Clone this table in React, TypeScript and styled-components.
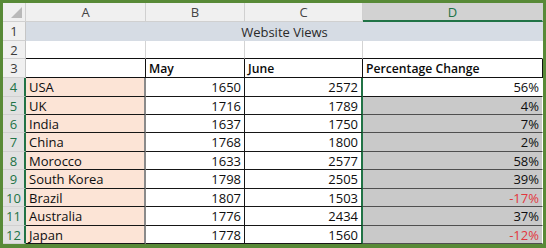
import React from 'react';
import styled, { createGlobalStyle } from 'styled-components';

const GlobalStyle = createGlobalStyle`
  html, body {
    margin: 0;
    padding: 0;
    background: #ffffff;
  }
  body {
    font-family: 'Open Sans', 'Liberation Sans', sans-serif;
  }
`;

const green = '#217346';
const frame = '#588a37';

type Row = { country: string; may: number; june: number; change: number };

const rows: Row[] = [
  { country: 'USA', may: 1650, june: 2572, change: 56 },
  { country: 'UK', may: 1716, june: 1789, change: 4 },
  { country: 'India', may: 1637, june: 1750, change: 7 },
  { country: 'China', may: 1768, june: 1800, change: 2 },
  { country: 'Morocco', may: 1633, june: 2577, change: 58 },
  { country: 'South Korea', may: 1798, june: 2505, change: 39 },
  { country: 'Brazil', may: 1807, june: 1503, change: -17 },
  { country: 'Australia', may: 1776, june: 2434, change: 37 },
  { country: 'Japan', may: 1778, june: 1560, change: -12 },
];

const Frame = styled.div`
  width: 546px;
  height: 248px;
  box-sizing: border-box;
  border: 3px solid ${frame};
  border-bottom-width: 4px;
  overflow: hidden;
`;

const Sheet = styled.div`
  display: grid;
  grid-template-columns: 23px 120px 99px 118px 180px;
  grid-template-rows: 19px 19px 18px 19px 19px 18px 18px 19px 18px 19px 18px 19px 18px;
  font-size: 13px;
  color: #111111;
`;

const Corner = styled.div`
  position: relative;
  background: #f0f0f0;
  border-right: 1px solid #d0d0d0;
  border-bottom: 1px solid #d0d0d0;
  box-sizing: border-box;

  &::after {
    content: '';
    position: absolute;
    right: 3px;
    bottom: 3px;
    border-style: solid;
    border-width: 0 0 11px 11px;
    border-color: transparent transparent #b9b9b9 transparent;
  }
`;

const ColHead = styled.div<{ $active?: boolean }>`
  display: flex;
  align-items: center;
  justify-content: center;
  box-sizing: border-box;
  background: ${(p) => (p.$active ? '#d2d2d2' : '#f0f0f0')};
  color: ${(p) => (p.$active ? green : '#444444')};
  border-right: 1px solid ${(p) => (p.$active ? '#d2d2d2' : '#d0d0d0')};
  border-bottom: ${(p) => (p.$active ? `2px solid ${green}` : '1px solid #d0d0d0')};
`;

const RowHead = styled.div<{ $active?: boolean }>`
  display: flex;
  align-items: center;
  justify-content: center;
  box-sizing: border-box;
  background: ${(p) => (p.$active ? '#e1e1e1' : '#f0f0f0')};
  color: ${(p) => (p.$active ? green : '#3b3b3b')};
  border-bottom: 1px solid #d0d0d0;
  border-right: ${(p) => (p.$active ? `2px solid ${green}` : '1px solid #c6c6c6')};
`;

const TitleCell = styled.div`
  grid-column: span 4;
  display: flex;
  align-items: center;
  justify-content: center;
  background: #d6dce4;
  color: #2a2a2a;
`;

const BlankCell = styled.div<{ $last?: boolean }>`
  box-sizing: border-box;
  border-right: 1px solid ${(p) => (p.$last ? '#ffffff' : '#d4d4d4')};
  border-bottom: 1px solid #111111;
`;

const HeadCell = styled.div`
  display: flex;
  align-items: center;
  padding-left: 3px;
  box-sizing: border-box;
  font-weight: 600;
  font-size: 12.2px;
  color: #0a0a0a;
  border-right: 1px solid #111111;
  border-bottom: 1px solid #111111;
`;

type Tone = 'peach' | 'white' | 'gray';

const tones: Record<Tone, string> = {
  peach: '#fce4d6',
  white: '#ffffff',
  gray: '#c9c9c9',
};

const Cell = styled.div<{ $tone: Tone; $num?: boolean; $neg?: boolean; $edge?: string }>`
  display: flex;
  align-items: center;
  justify-content: ${(p) => (p.$num ? 'flex-end' : 'flex-start')};
  padding: 0 3px;
  box-sizing: border-box;
  background: ${(p) => tones[p.$tone]};
  color: ${(p) => (p.$neg ? '#e2373d' : '#0e0e0e')};
  border-bottom: 1px solid ${(p) => (p.$tone === 'gray' ? '#4f4f4f' : '#161616')};
  border-right: ${(p) => p.$edge || '1px solid #161616'};
`;

const App = () => {
  return (
    <Frame>
      <GlobalStyle />
      <Sheet>
        <Corner />
        <ColHead>A</ColHead>
        <ColHead>B</ColHead>
        <ColHead>C</ColHead>
        <ColHead $active>D</ColHead>

        <RowHead>1</RowHead>
        <TitleCell>Website Views</TitleCell>

        <RowHead>2</RowHead>
        <BlankCell />
        <BlankCell />
        <BlankCell />
        <BlankCell $last />

        <RowHead>3</RowHead>
        <HeadCell />
        <HeadCell>May</HeadCell>
        <HeadCell>June</HeadCell>
        <HeadCell>Percentage Change</HeadCell>

        {rows.map((r, i) => (
          <React.Fragment key={r.country}>
            <RowHead $active>{i + 4}</RowHead>
            <Cell $tone="peach" $edge="2px solid #8a8a8a">
              {r.country}
            </Cell>
            <Cell $tone="white" $num>
              {r.may}
            </Cell>
            <Cell $tone="white" $num $edge={`2px solid ${green}`}>
              {r.june}
            </Cell>
            <Cell
              $tone={i === 0 ? 'white' : 'gray'}
              $num
              $neg={r.change < 0}
              $edge="1px solid #ffffff"
            >
              {r.change}%
            </Cell>
          </React.Fragment>
        ))}
      </Sheet>
    </Frame>
  );
};

export default App;
